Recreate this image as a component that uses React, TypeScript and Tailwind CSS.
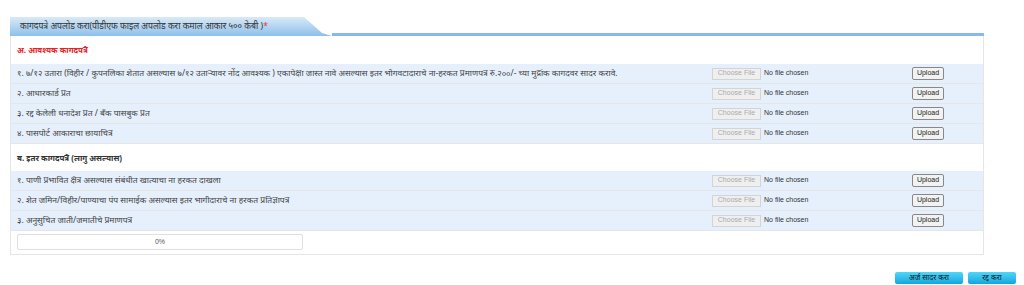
import React from 'react'

const REQUIRED_DOCS = [
  '१. ७/१२ उतारा (विहीर / कुपनलिका शेतात असल्यास ७/१२ उताऱ्यावर नोंद आवश्यक ) एकापेक्षा जास्त नावे असल्यास इतर भोगवटादाराचे ना-हरकत प्रमाणपत्र रु.२००/- च्या मुद्रांक कागदवर सादर करावे.',
  '२. आधारकार्ड प्रत',
  '३. रद्द केलेली धनादेश प्रत / बँक पासबुक प्रत',
  '४. पासपोर्ट आकाराचा छायाचित्र',
]

const OTHER_DOCS = [
  '१. पाणी प्रभावित क्षेत्र असल्यास संबंधीत खात्याचा ना हरकत दाखला',
  '२. शेत जमिन/विहीर/पाण्याचा पंप सामाईक असल्यास इतर भागीदाराचे ना हरकत प्रतिज्ञापत्र',
  '३. अनुसुचित जाती/जमातीचे प्रमाणपत्र',
]

const font = "font-['Noto_Sans','Noto_Sans_Devanagari','Lohit_Devanagari',sans-serif]"

function DocRow({ label }: { label: string }) {
  return (
    <div className="grid h-[20px] grid-cols-[695px_200px_1fr] items-center border-b border-[#e6e6e6] bg-[#e6f0fc] pl-[6px]">
      <span className="truncate text-[8.5px] text-[#444]">{label}</span>
      <div className="flex items-center gap-[3px]">
        <span className="flex h-[12px] w-[49px] items-center justify-center border border-[#d4d4d4] bg-[#efefef] font-['Liberation_Sans',sans-serif] text-[7px] text-[#aaa]">
          Choose File
        </span>
        <span className="font-['Liberation_Sans',sans-serif] text-[7px] text-[#333]">No file chosen</span>
      </div>
      <div>
        <button
          type="button"
          className="flex h-[13px] w-[32px] items-center justify-center rounded-[2px] border border-[#888] bg-[#f2f2f2] font-['Liberation_Sans',sans-serif] text-[7px] text-[#222]"
        >
          Upload
        </button>
      </div>
    </div>
  )
}

export default function App() {
  return (
    <div className={`min-h-[285px] w-[1024px] bg-white ${font}`}>
      <div className="ml-[10px] w-[974px] pt-[17px]">
        <div className="flex h-[19px] items-end">
          <div className="flex h-[19px] w-[322px] items-center bg-gradient-to-b from-[#d9e9f7] to-[#8dc0ea] pl-[10px] text-[8.7px] text-[#333] [clip-path:polygon(0_0,294px_0,312px_84%,322px_100%,0_100%)]">
            कागदपत्रे अपलोड करा(पीडीएफ फाइल अपलोड करा कमाल आकार ५०० केबी )<span className="text-[#e53935]">*</span>
          </div>
          <div className="h-[3px] flex-1 bg-[#85bbe8]" />
        </div>

        <div className="border-x border-b border-[#e6e6e6]">
          <div className="flex h-[28px] items-center pl-[6px] text-[8px] font-bold text-[#e8231f]">
            अ. आवश्यक कागदपत्रे
          </div>
          {REQUIRED_DOCS.map(doc => (
            <DocRow key={doc} label={doc} />
          ))}

          <div className="flex h-[27px] items-center pl-[6px] text-[8px] font-bold text-[#333]">
            ब. इतर कागदपत्रे (लागु असल्यास)
          </div>
          {OTHER_DOCS.map(doc => (
            <DocRow key={doc} label={doc} />
          ))}

          <div className="px-[6px] pt-[3px] pb-[4px]">
            <div className="flex h-[16px] w-[286px] items-center justify-center rounded-[2px] border border-[#e0e0e0] bg-white font-['Liberation_Sans',sans-serif] text-[7px] text-[#555]">
              0%
            </div>
          </div>
        </div>
      </div>

      <div className="mt-[17px] flex justify-end gap-[5px] pr-[8px]">
        <button
          type="button"
          className="h-[12px] w-[68px] rounded-[2px] bg-gradient-to-b from-[#4fd6f8] to-[#0aa6df] text-[7.5px] text-[#111]"
        >
          अर्ज सादर करा
        </button>
        <button
          type="button"
          className="h-[12px] w-[48px] rounded-[2px] bg-gradient-to-b from-[#4fd6f8] to-[#0aa6df] text-[7.5px] text-[#111]"
        >
          रद्द करा
        </button>
      </div>
    </div>
  )
}
